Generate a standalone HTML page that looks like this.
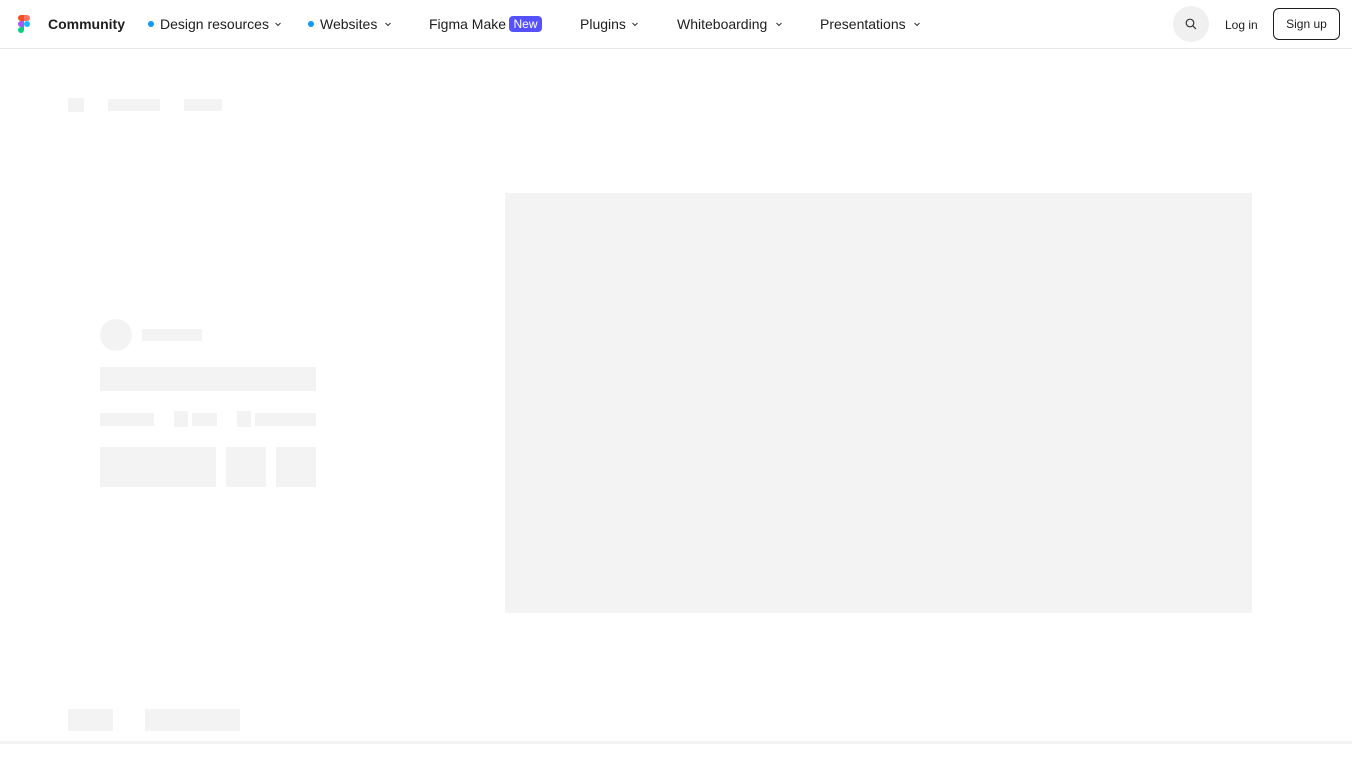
<!DOCTYPE html>
<html><head><meta charset="utf-8"><style>
*{margin:0;padding:0;box-sizing:border-box}
body{width:1352px;height:760px;background:#fff;font-family:"Liberation Sans",sans-serif;position:relative;overflow:hidden;color:#1e1e1e}
.nav{position:absolute;top:0;left:0;width:1352px;height:49px;border-bottom:1px solid #e6e6e6}
.t{position:absolute;top:16px;font-size:14px;line-height:16px}
.dot{position:absolute;top:21px;width:6px;height:6px;border-radius:50%;background:#0d99ff}
.chev{position:absolute;top:19px;width:10px;height:10px}
.s{position:absolute;background:#f3f3f3}
</style></head><body>
<div class="nav">
<svg style="position:absolute;left:18px;top:15px" width="12" height="18" viewBox="0 0 12 18">
<path d="M3 0h3v6H3a3 3 0 0 1 0-6z" fill="#f24e1e"/><path d="M6 0h3a3 3 0 0 1 0 6H6z" fill="#ff7262"/>
<path d="M3 6h3v6H3a3 3 0 0 1 0-6z" fill="#a259ff"/><circle cx="9" cy="9" r="3" fill="#1abcfe"/>
<path d="M3 12h3v3a3 3 0 1 1-3-3z" fill="#0acf83"/></svg>
<div class="t" style="left:48px;font-weight:bold;font-size:14px">Community</div>
<div class="dot" style="left:148px"></div><div class="t" style="left:160px">Design resources</div>
<svg class="chev" style="left:273px" viewBox="0 0 10 10"><path d="M2.5 4l2.5 2.5L7.5 4" stroke="#333" fill="none"/></svg>
<div class="dot" style="left:308px"></div><div class="t" style="left:320px">Websites</div>
<svg class="chev" style="left:383px" viewBox="0 0 10 10"><path d="M2.5 4l2.5 2.5L7.5 4" stroke="#333" fill="none"/></svg>
<div class="t" style="left:429px">Figma Make</div>
<div style="position:absolute;left:509px;top:16px;width:33px;height:16px;border-radius:4px;background:#5551ff;color:#fff;font-size:12px;line-height:16px;text-align:center">New</div>
<div class="t" style="left:580px">Plugins</div>
<svg class="chev" style="left:630px" viewBox="0 0 10 10"><path d="M2.5 4l2.5 2.5L7.5 4" stroke="#333" fill="none"/></svg>
<div class="t" style="left:677px">Whiteboarding</div>
<svg class="chev" style="left:774px" viewBox="0 0 10 10"><path d="M2.5 4l2.5 2.5L7.5 4" stroke="#333" fill="none"/></svg>
<div class="t" style="left:820px">Presentations</div>
<svg class="chev" style="left:912px" viewBox="0 0 10 10"><path d="M2.5 4l2.5 2.5L7.5 4" stroke="#333" fill="none"/></svg>
<div style="position:absolute;left:1173px;top:6px;width:36px;height:36px;border-radius:50%;background:#f0f0f0"></div>
<svg style="position:absolute;left:1185px;top:18px" width="12" height="12" viewBox="0 0 12 12"><circle cx="5" cy="5" r="3.8" stroke="#333" fill="none" stroke-width="1.2"/><path d="M7.8 7.8L11 11" stroke="#333" stroke-width="1.2"/></svg>
<div class="t" style="left:1225px;top:17px;font-size:12px">Log in</div>
<div style="position:absolute;left:1273px;top:8px;width:67px;height:32px;border:1px solid #1e1e1e;border-radius:6px;font-size:12px;line-height:30px;text-align:center">Sign up</div>
</div>
<div class="s" style="left:68px;top:98px;width:16px;height:14px"></div>
<div class="s" style="left:108px;top:99px;width:52px;height:12px"></div>
<div class="s" style="left:184px;top:99px;width:38px;height:12px"></div>
<div class="s" style="left:505px;top:193px;width:747px;height:420px"></div>
<div class="s" style="left:100px;top:319px;width:32px;height:32px;border-radius:50%"></div>
<div class="s" style="left:142px;top:329px;width:60px;height:12px"></div>
<div class="s" style="left:100px;top:367px;width:216px;height:24px"></div>
<div class="s" style="left:100px;top:413px;width:54px;height:13px"></div>
<div class="s" style="left:174px;top:411px;width:14px;height:16px"></div>
<div class="s" style="left:192px;top:413px;width:25px;height:13px"></div>
<div class="s" style="left:237px;top:411px;width:14px;height:16px"></div>
<div class="s" style="left:255px;top:413px;width:61px;height:13px"></div>
<div class="s" style="left:100px;top:447px;width:116px;height:40px"></div>
<div class="s" style="left:226px;top:447px;width:40px;height:40px"></div>
<div class="s" style="left:276px;top:447px;width:40px;height:40px"></div>
<div class="s" style="left:68px;top:709px;width:45px;height:22px"></div>
<div class="s" style="left:145px;top:709px;width:95px;height:22px"></div>
<div class="s" style="left:0;top:741px;width:1352px;height:3px"></div>
</body></html>
